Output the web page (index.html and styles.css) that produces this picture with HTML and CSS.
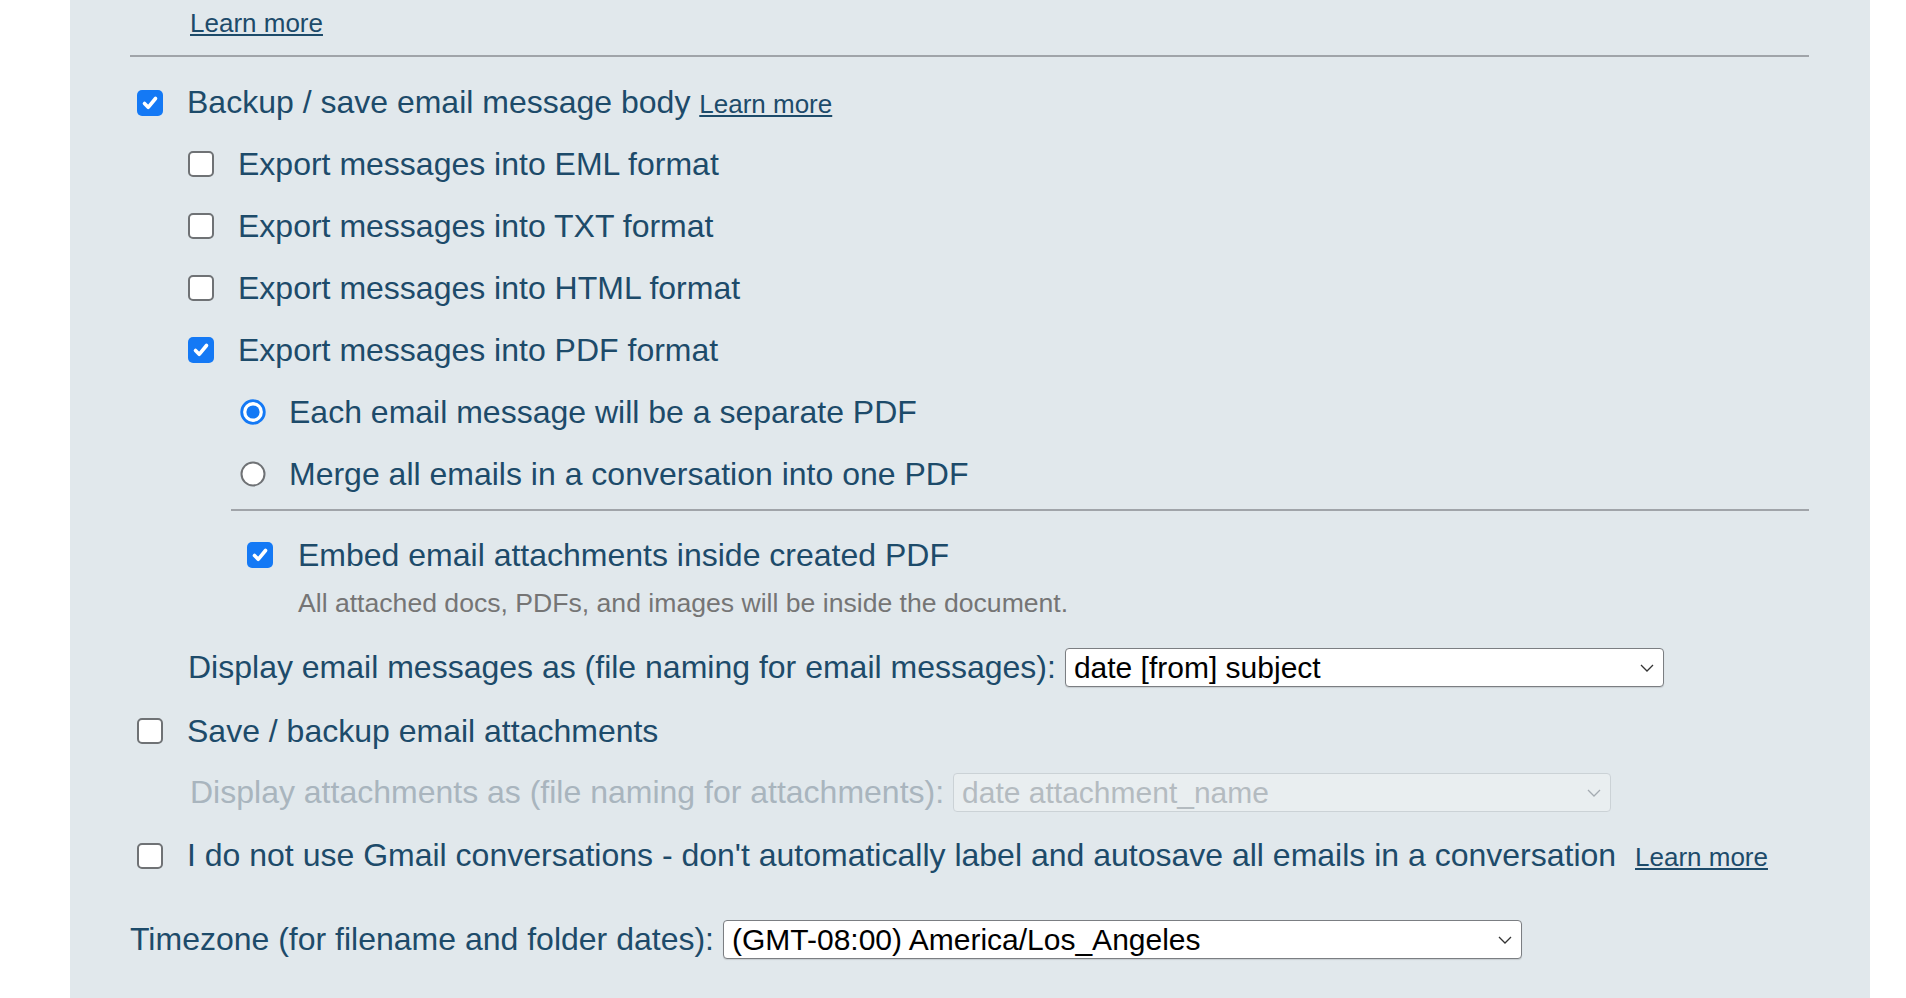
FILE: index.html
```html
<!DOCTYPE html>
<html>
<head>
<meta charset="utf-8">
<link rel="stylesheet" href="styles.css">
</head>
<body>
<div class="page">
  <div class="panel">
    <div class="top-link"><a href="#">Learn more</a></div>
    <div class="rule"></div>

    <label class="row lvl0 first">
      <span class="box checked"><svg viewBox="0 0 26 26" width="26" height="26"><path d="M7.5 13.5 L11.2 17.3 L18.5 8.5" fill="none" stroke="#fff" stroke-width="3.6" stroke-linecap="round" stroke-linejoin="round"/></svg></span>
      <span class="txt">Backup / save email message body <a href="#" class="inline-link">Learn more</a></span>
    </label>

    <label class="row lvl1"><span class="box"></span><span class="txt">Export messages into EML format</span></label>
    <label class="row lvl1"><span class="box"></span><span class="txt">Export messages into TXT format</span></label>
    <label class="row lvl1"><span class="box"></span><span class="txt">Export messages into HTML format</span></label>
    <label class="row lvl1">
      <span class="box checked"><svg viewBox="0 0 26 26" width="26" height="26"><path d="M7.5 13.5 L11.2 17.3 L18.5 8.5" fill="none" stroke="#fff" stroke-width="3.6" stroke-linecap="round" stroke-linejoin="round"/></svg></span>
      <span class="txt">Export messages into PDF format</span>
    </label>

    <label class="row lvl2">
      <span class="radio on"><svg viewBox="0 0 26 26" width="26" height="26"><circle cx="13" cy="13" r="11.3" fill="#fff" stroke="#1479f5" stroke-width="2.8"/><circle cx="13" cy="13" r="6.6" fill="#1479f5"/></svg></span>
      <span class="txt">Each email message will be a separate PDF</span>
    </label>
    <label class="row lvl2">
      <span class="radio"><svg viewBox="0 0 26 26" width="26" height="26"><circle cx="13" cy="13" r="11.5" fill="#fff" stroke="#6f7275" stroke-width="2"/></svg></span>
      <span class="txt">Merge all emails in a conversation into one PDF</span>
    </label>

    <div class="rule sub"></div>

    <label class="row lvl3 embed">
      <span class="box checked"><svg viewBox="0 0 26 26" width="26" height="26"><path d="M7.5 13.5 L11.2 17.3 L18.5 8.5" fill="none" stroke="#fff" stroke-width="3.6" stroke-linecap="round" stroke-linejoin="round"/></svg></span>
      <span class="txt">Embed email attachments inside created PDF</span>
    </label>
    <div class="hint">All attached docs, PDFs, and images will be inside the document.</div>

    <div class="row field naming">
      <span class="txt">Display email messages as (file naming for email messages):</span>
      <span class="sel wide">
        <select><option>date [from] subject</option></select>
        <svg class="chev" viewBox="0 0 14 8" width="14" height="8"><path d="M1 1 L7 7 L13 1" fill="none" stroke="#333" stroke-width="1.3"/></svg>
      </span>
    </div>

    <label class="row lvl0 attach"><span class="box"></span><span class="txt">Save / backup email attachments</span></label>

    <div class="row field disabled">
      <span class="txt">Display attachments as (file naming for attachments):</span>
      <span class="sel att">
        <select disabled><option>date attachment_name</option></select>
        <svg class="chev" viewBox="0 0 14 8" width="14" height="8"><path d="M1 1 L7 7 L13 1" fill="none" stroke="#a4abb1" stroke-width="1.3"/></svg>
      </span>
    </div>

    <label class="row lvl0 gmail">
      <span class="box"></span>
      <span class="txt">I do not use Gmail conversations - don't automatically label and autosave all emails in a conversation <a href="#" class="inline-link far">Learn more</a></span>
    </label>

    <div class="row tz">
      <span class="txt">Timezone (for filename and folder dates):</span>
      <span class="sel tzsel">
        <select><option>(GMT-08:00) America/Los_Angeles</option></select>
        <svg class="chev" viewBox="0 0 14 8" width="14" height="8"><path d="M1 1 L7 7 L13 1" fill="none" stroke="#333" stroke-width="1.3"/></svg>
      </span>
    </div>
  </div>
</div>
</body>
</html>
```

FILE: styles.css
```css
html, body {
  margin: 0;
  padding: 0;
  background: #ffffff;
}

body {
  font-family: "Liberation Sans", Arial, Helvetica, sans-serif;
  color: #1d4b6a;
}

.page {
  width: 1906px;
  height: 998px;
  overflow: hidden;
}

.panel {
  margin-left: 70px;
  width: 1800px;
  height: 998px;
  box-sizing: border-box;
  background: #e1e8ec;
  padding: 0 61px 0 60px;
}

a {
  color: #1d4b6a;
  text-decoration: underline;
  text-underline-offset: 2px;
  font-size: 26px;
}

.top-link {
  height: 46px;
  line-height: 46px;
  padding-left: 60px;
}

.rule {
  height: 2px;
  background: #a0a4a9;
  margin-top: 9px;
}

.rule.sub {
  margin-top: 4px;
  margin-left: 101px;
}

.row {
  display: flex;
  align-items: center;
  height: 62px;
  font-size: 32px;
  white-space: nowrap;
}

.row .txt {
  line-height: 40px;
}

.row.first {
  margin-top: 15px;
  margin-bottom: -1px;
}

.lvl0 { padding-left: 7px; }
.lvl1 { padding-left: 58px; }
.lvl2 { padding-left: 110px; }
.lvl3 { padding-left: 117px; }

.box, .radio {
  flex: none;
  width: 26px;
  height: 26px;
  box-sizing: border-box;
  display: block;
}

.lvl0 .box { margin-right: 24px; }
.lvl1 .box { margin-right: 24px; }
.lvl2 .radio { margin-right: 23px; }
.lvl3 .box { margin-right: 25px; }

.box {
  border: 2px solid #6f7275;
  border-radius: 5px;
  background: #ffffff;
}

.box.checked {
  border: none;
  border-radius: 5px;
  background: #1479f5;
}

.box svg, .radio svg {
  display: block;
}

.row.embed {
  height: 50px;
  margin-top: 19px;
}

.hint {
  margin-top: 6px;
  padding-left: 168px;
  font-size: 26.6px;
  line-height: 34px;
  color: #757575;
}

.inline-link.far {
  margin-left: 10px;
}

.field.naming {
  margin-top: 16px;
  padding-left: 58px;
}

.row.attach {
  margin-top: 2px;
}

.field.disabled {
  height: 60px;
  padding-left: 60px;
  color: #a9b5be;
}

.row.gmail {
  margin-top: 3px;
}

.row.tz {
  margin-top: 21px;
}

.sel {
  position: relative;
  display: block;
  margin-left: 9px;
  height: 39px;
}

.sel select {
  -webkit-appearance: none;
  appearance: none;
  display: block;
  height: 39px;
  box-sizing: border-box;
  border: 1px solid #7b7e82;
  border-radius: 4px;
  background: #ffffff;
  box-shadow: 0 1px 1px rgba(0, 0, 0, 0.12);
  font-family: "Liberation Sans", Arial, Helvetica, sans-serif;
  font-size: 30px;
  color: #000000;
  padding: 0 30px 0 8px;
  margin: 0;
  outline: none;
}

.sel.wide select { width: 599px; }
.sel.att select {
  width: 658px;
  background: #edf1f3;
  border-color: #c3c9ce;
  color: #a2a9ae;
  box-shadow: none;
}
.sel.tzsel select { width: 799px; }

.chev {
  position: absolute;
  right: 10px;
  top: 16px;
}
```
